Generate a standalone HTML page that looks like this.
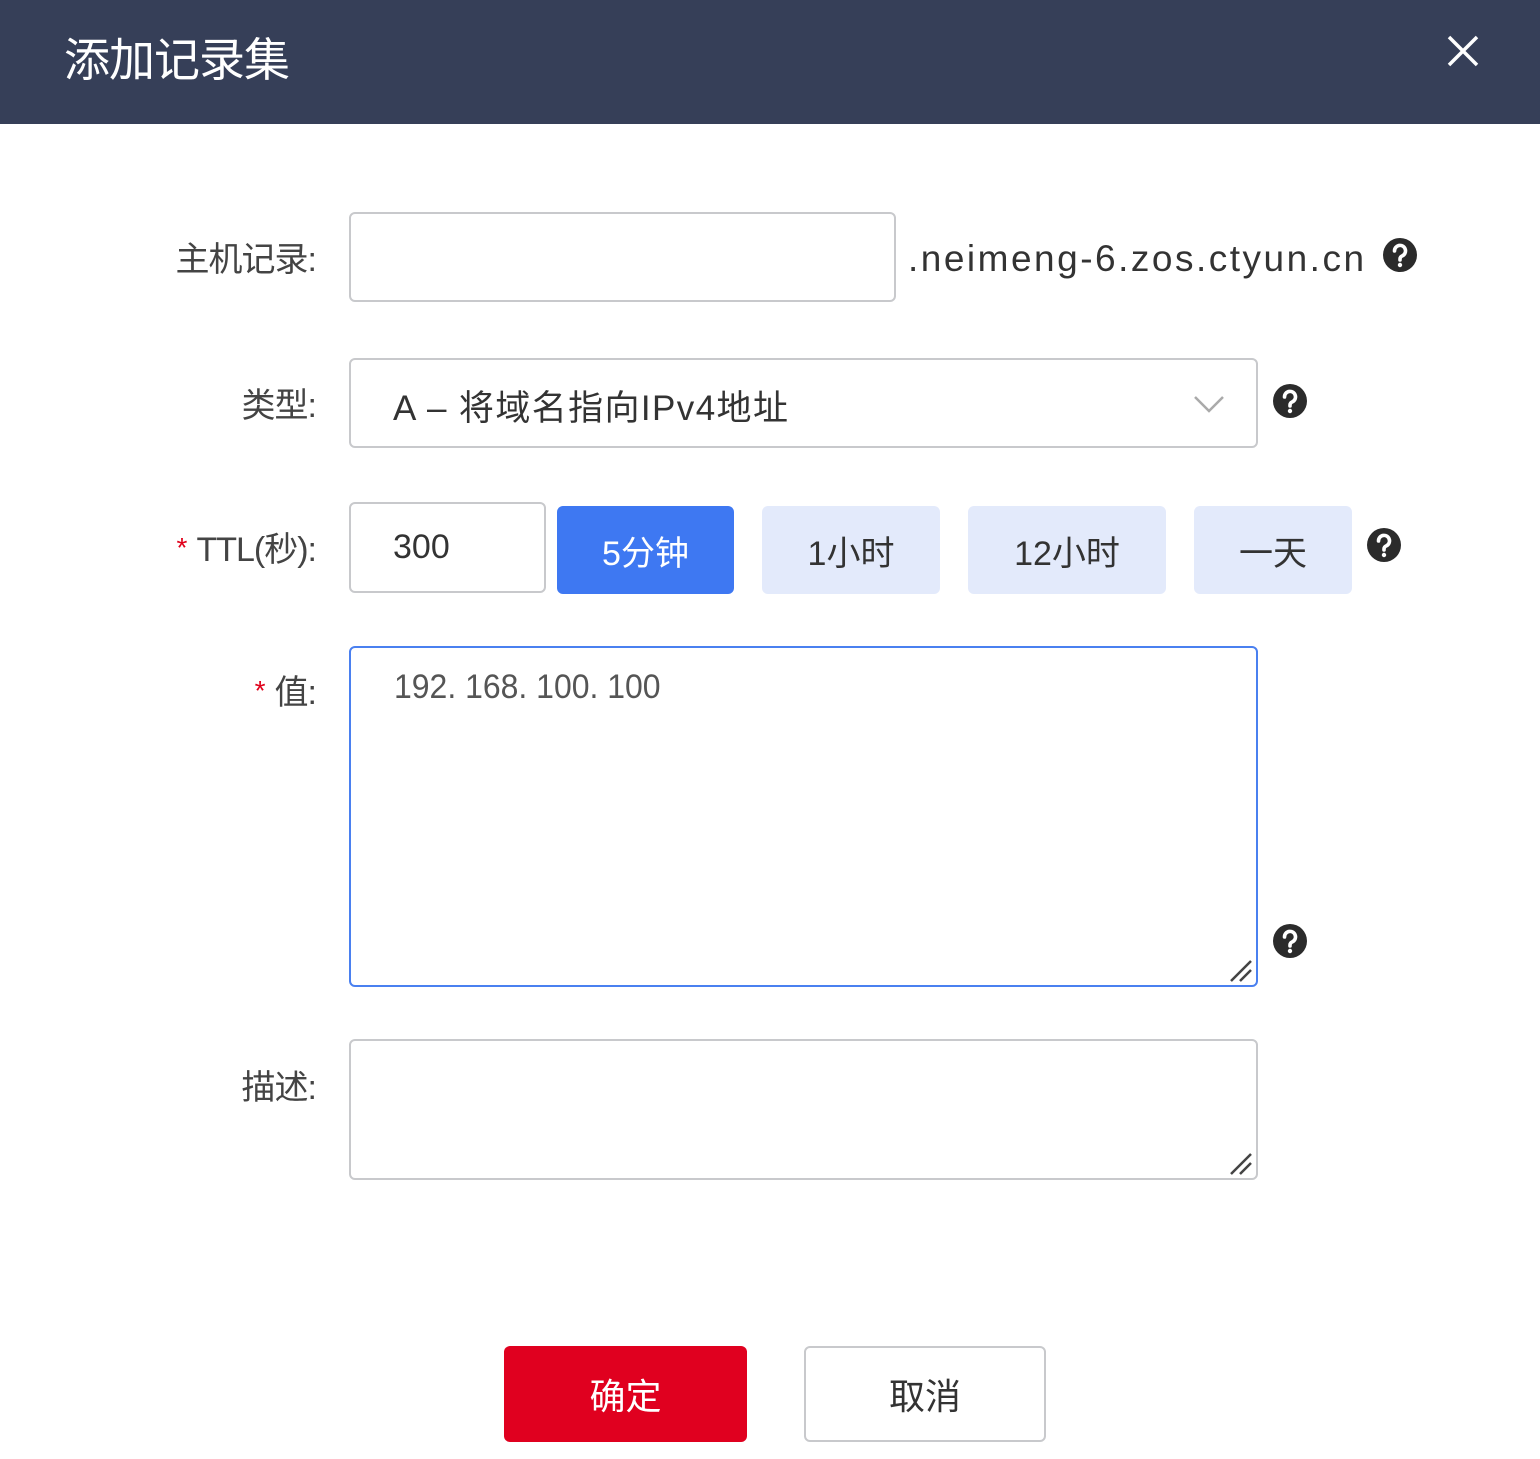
<!DOCTYPE html>
<html><head><meta charset="utf-8">
<style>
*{box-sizing:border-box;margin:0;padding:0}
body{width:1540px;height:1459px;background:#fff;position:relative;overflow:hidden;font-family:"Liberation Sans","Noto Sans CJK SC",sans-serif;color:#333}
.hdr{position:absolute;left:0;top:0;width:1540px;height:124px;background:#363f58}
.title{position:absolute;left:64px;top:24px;font-size:46px;color:#fff;letter-spacing:-1px}
.close{position:absolute;left:1446px;top:34px}
.lbl{position:absolute;font-size:34px;color:#444;text-align:right;right:1224px;letter-spacing:-1px}
.star{color:#e0001a;font-size:28px;margin-right:10px;vertical-align:4px}
.box{position:absolute;border:2px solid #c8c9cc;border-radius:6px;background:#fff}
.txt{position:absolute;font-size:34px;color:#333}
.btn{position:absolute;top:506px;height:88px;border-radius:6px;background:#e3eafb;font-size:34px;color:#333;display:flex;align-items:center;justify-content:center}
.q{position:absolute;width:34px;height:34px}
</style></head><body>
<div class="hdr"></div>
<div class="title">添加记录集</div>
<svg class="close" width="34" height="34" viewBox="0 0 34 34"><path d="M3 3L31 31M31 3L3 31" stroke="#fff" stroke-width="3.5"/></svg>

<div class="lbl" style="top:232px">主机记录:</div>
<div class="box" style="left:349px;top:212px;width:547px;height:90px"></div>
<div class="txt" style="left:908px;top:238px;color:#333;font-size:37px;letter-spacing:2.5px">.neimeng-6.zos.ctyun.cn</div>
<svg class="q" style="left:1383px;top:238px" viewBox="0 0 34 34"><circle cx="17" cy="17" r="17" fill="#2b2b2b"/><path d="M11.5 13a5.5 5.5 0 1 1 7.5 5c-1.5.7-2 1.5-2 3v1" stroke="#fff" stroke-width="3.6" fill="none" stroke-linecap="round"/><circle cx="17" cy="27" r="2.2" fill="#fff"/></svg>

<div class="lbl" style="top:378px">类型:</div>
<div class="box" style="left:349px;top:358px;width:909px;height:90px"></div>
<div class="txt" style="left:393px;top:380px;font-size:35px;letter-spacing:1.4px">A – 将域名指向IPv4地址</div>
<svg style="position:absolute;left:1193px;top:394px" width="32" height="20" viewBox="0 0 32 20"><path d="M2 3L16 17L30 3" stroke="#aaa" stroke-width="2.5" fill="none"/></svg>
<svg class="q" style="left:1273px;top:384px" viewBox="0 0 34 34"><circle cx="17" cy="17" r="17" fill="#2b2b2b"/><path d="M11.5 13a5.5 5.5 0 1 1 7.5 5c-1.5.7-2 1.5-2 3v1" stroke="#fff" stroke-width="3.6" fill="none" stroke-linecap="round"/><circle cx="17" cy="27" r="2.2" fill="#fff"/></svg>

<div class="lbl" style="top:522px"><span class="star">*</span>TTL(秒):</div>
<div class="box" style="left:349px;top:502px;width:197px;height:91px"></div>
<div class="txt" style="left:393px;top:528px">300</div>
<div class="btn" style="left:557px;width:177px;background:#3e78f2;color:#fff">5分钟</div>
<div class="btn" style="left:762px;width:178px">1小时</div>
<div class="btn" style="left:968px;width:198px">12小时</div>
<div class="btn" style="left:1194px;width:158px">一天</div>
<svg class="q" style="left:1367px;top:528px" viewBox="0 0 34 34"><circle cx="17" cy="17" r="17" fill="#2b2b2b"/><path d="M11.5 13a5.5 5.5 0 1 1 7.5 5c-1.5.7-2 1.5-2 3v1" stroke="#fff" stroke-width="3.6" fill="none" stroke-linecap="round"/><circle cx="17" cy="27" r="2.2" fill="#fff"/></svg>

<div class="lbl" style="top:665px"><span class="star">*</span>值:</div>
<div class="box" style="left:349px;top:646px;width:909px;height:341px;border-color:#4a80f0"></div>
<div class="txt" style="left:394px;top:668px;font-family:'Liberation Sans','Noto Serif CJK SC',serif;color:#555;transform:scaleX(0.94);transform-origin:left">192. 168. 100. 100</div>
<svg style="position:absolute;left:1228px;top:958px" width="26" height="26" viewBox="0 0 26 26"><path d="M3 23L23 3M12 23L23 12" stroke="#444" stroke-width="2.5"/></svg>
<svg class="q" style="left:1273px;top:924px" viewBox="0 0 34 34"><circle cx="17" cy="17" r="17" fill="#2b2b2b"/><path d="M11.5 13a5.5 5.5 0 1 1 7.5 5c-1.5.7-2 1.5-2 3v1" stroke="#fff" stroke-width="3.6" fill="none" stroke-linecap="round"/><circle cx="17" cy="27" r="2.2" fill="#fff"/></svg>

<div class="lbl" style="top:1060px">描述:</div>
<div class="box" style="left:349px;top:1039px;width:909px;height:141px"></div>
<svg style="position:absolute;left:1228px;top:1151px" width="26" height="26" viewBox="0 0 26 26"><path d="M3 23L23 3M12 23L23 12" stroke="#444" stroke-width="2.5"/></svg>

<div style="position:absolute;left:504px;top:1346px;width:243px;height:96px;background:#e0001f;border-radius:6px;color:#fff;font-size:36px;display:flex;align-items:center;justify-content:center">确定</div>
<div style="position:absolute;left:804px;top:1346px;width:242px;height:96px;border:2px solid #c8c9cc;border-radius:6px;color:#333;font-size:36px;display:flex;align-items:center;justify-content:center">取消</div>
</body></html>
